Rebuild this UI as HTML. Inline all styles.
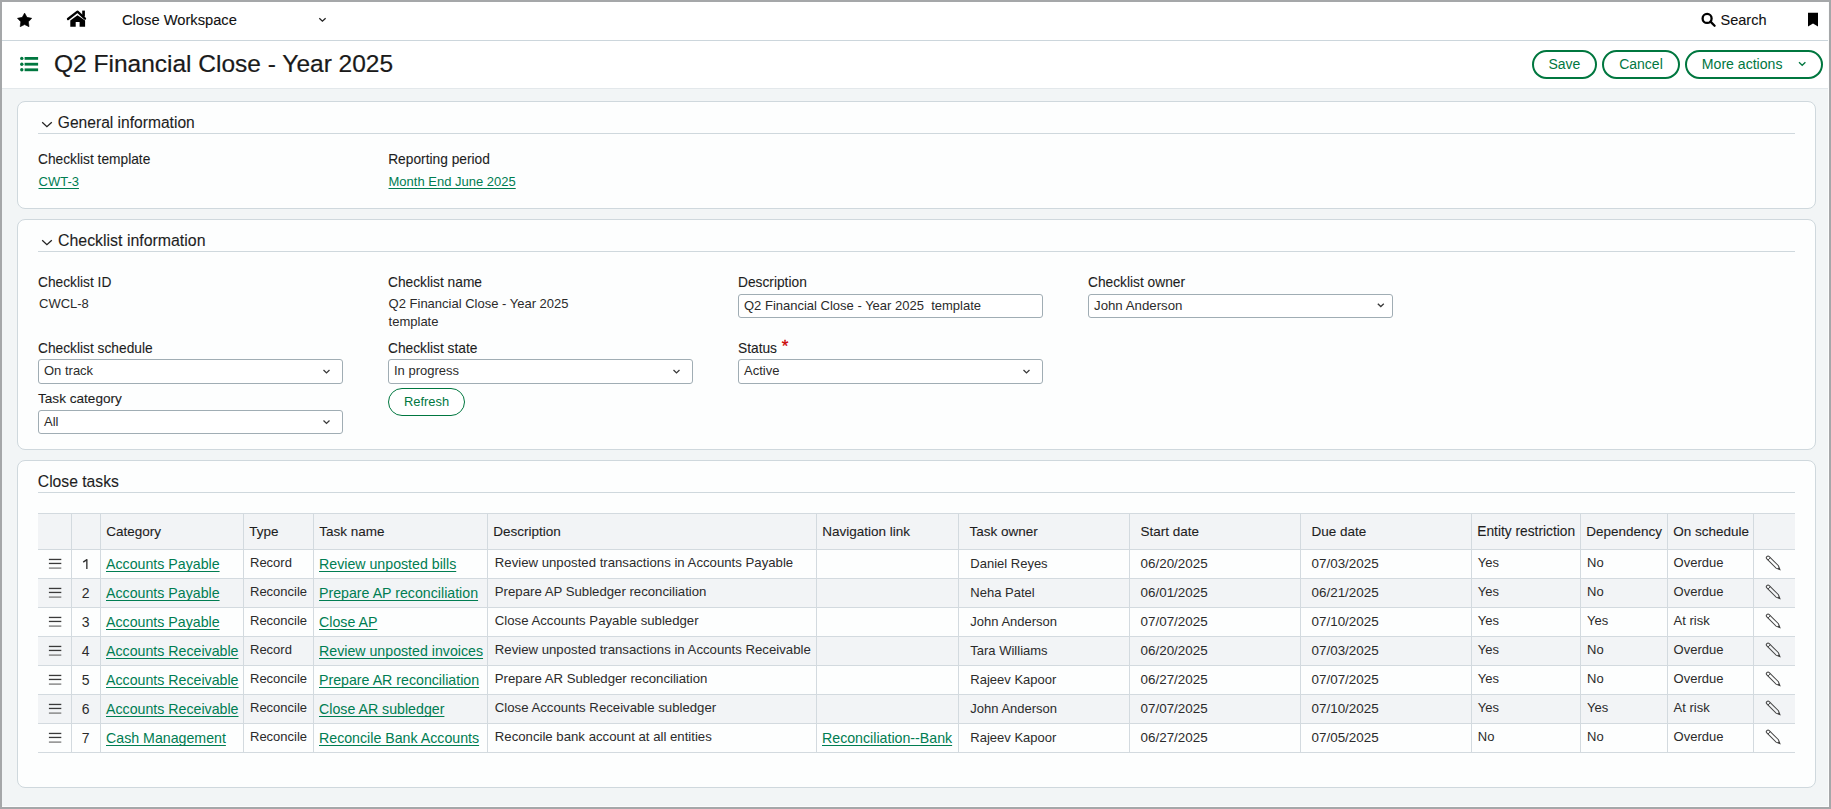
<!DOCTYPE html>
<html><head><meta charset="utf-8"><title>Q2 Financial Close - Year 2025</title>
<style>
html,body{margin:0;padding:0;width:1831px;height:809px;overflow:hidden;background:#a5a7a9}
body{position:relative;font-family:"Liberation Sans", sans-serif}
.t{position:absolute;white-space:nowrap;font-family:"Liberation Sans", sans-serif}
svg.ov{position:absolute;left:0;top:0}
</style></head><body>
<div style="position:absolute;left:0px;top:0px;width:1831px;height:809px;box-sizing:border-box;background:#a5a7a9"></div>
<div style="position:absolute;left:2px;top:2px;width:1827px;height:805px;box-sizing:border-box;background:#f2f5f6;border-right:1px solid #fbfcfc;border-bottom:1px solid #fbfcfc"></div>
<div style="position:absolute;left:2px;top:2px;width:1826px;height:38px;box-sizing:border-box;background:#fff"></div>
<div style="position:absolute;left:2px;top:40px;width:1826px;height:1px;box-sizing:border-box;background:#ccd6dc"></div>
<div style="position:absolute;left:2px;top:41px;width:1826px;height:47px;box-sizing:border-box;background:#fff"></div>
<div style="position:absolute;left:2px;top:88px;width:1826px;height:1px;box-sizing:border-box;background:#e3e8eb"></div>
<div class="t" style="left:122.00px;top:13.16px;font-size:14.7px;line-height:14.7px;color:#111;-webkit-text-stroke:0.1px #111">Close Workspace</div>
<div class="t" style="left:1720.50px;top:13.13px;font-size:14.5px;line-height:14.5px;color:#111;-webkit-text-stroke:0.1px #111">Search</div>
<div class="t" style="left:54.00px;top:51.66px;font-size:24.5px;line-height:24.5px;color:#1a1a1a;-webkit-text-stroke:0.2px #1a1a1a">Q2 Financial Close - Year 2025</div>
<div style="position:absolute;left:1532px;top:50px;width:65px;height:29px;box-sizing:border-box;border:2px solid #00773f;border-radius:20px;background:#fff"></div>
<div class="t" style="left:1548.50px;top:57.35px;font-size:14px;line-height:14px;color:#00773f;">Save</div>
<div style="position:absolute;left:1602px;top:50px;width:78px;height:29px;box-sizing:border-box;border:2px solid #00773f;border-radius:20px;background:#fff"></div>
<div class="t" style="left:1619.20px;top:57.35px;font-size:14px;line-height:14px;color:#00773f;">Cancel</div>
<div style="position:absolute;left:1685px;top:50px;width:138px;height:29px;box-sizing:border-box;border:2px solid #00773f;border-radius:20px;background:#fff"></div>
<div class="t" style="left:1701.80px;top:57.26px;font-size:14.1px;line-height:14.1px;color:#00773f;">More actions</div>
<div style="position:absolute;left:17px;top:101px;width:1799px;height:108px;box-sizing:border-box;background:#fdfefe;border:1px solid #cfd8dd;border-radius:8px"></div>
<div style="position:absolute;left:17px;top:219px;width:1799px;height:231px;box-sizing:border-box;background:#fdfefe;border:1px solid #cfd8dd;border-radius:8px"></div>
<div style="position:absolute;left:17px;top:460px;width:1799px;height:328px;box-sizing:border-box;background:#fdfefe;border:1px solid #cfd8dd;border-radius:8px"></div>
<div class="t" style="left:57.80px;top:114.99px;font-size:15.6px;line-height:15.6px;color:#1e1e1e;-webkit-text-stroke:0.1px #1e1e1e">General information</div>
<div style="position:absolute;left:38px;top:133px;width:1757px;height:1px;box-sizing:border-box;background:#cfd8dd"></div>
<div class="t" style="left:38.00px;top:153.36px;font-size:13.75px;line-height:13.75px;color:#1e1e1e;-webkit-text-stroke:0.1px #1e1e1e">Checklist template</div>
<div class="t" style="left:388.20px;top:153.36px;font-size:13.75px;line-height:13.75px;color:#1e1e1e;-webkit-text-stroke:0.1px #1e1e1e">Reporting period</div>
<div class="t" style="left:38.50px;top:175.00px;font-size:13px;line-height:13px;color:#007d52;text-decoration:underline;text-underline-offset:2px">CWT-3</div>
<div class="t" style="left:388.50px;top:175.00px;font-size:13px;line-height:13px;color:#007d52;text-decoration:underline;text-underline-offset:2px">Month End June 2025</div>
<div class="t" style="left:58.00px;top:232.74px;font-size:15.9px;line-height:15.9px;color:#1e1e1e;-webkit-text-stroke:0.1px #1e1e1e">Checklist information</div>
<div style="position:absolute;left:38px;top:251px;width:1757px;height:1px;box-sizing:border-box;background:#cfd8dd"></div>
<div class="t" style="left:38.00px;top:275.56px;font-size:13.75px;line-height:13.75px;color:#1e1e1e;-webkit-text-stroke:0.1px #1e1e1e">Checklist ID</div>
<div class="t" style="left:388.00px;top:275.56px;font-size:13.75px;line-height:13.75px;color:#1e1e1e;-webkit-text-stroke:0.1px #1e1e1e">Checklist name</div>
<div class="t" style="left:738.00px;top:275.56px;font-size:13.75px;line-height:13.75px;color:#1e1e1e;-webkit-text-stroke:0.1px #1e1e1e">Description</div>
<div class="t" style="left:1088.00px;top:275.56px;font-size:13.75px;line-height:13.75px;color:#1e1e1e;-webkit-text-stroke:0.1px #1e1e1e">Checklist owner</div>
<div class="t" style="left:39.00px;top:297.00px;font-size:13px;line-height:13px;color:#2b2b2b;">CWCL-8</div>
<div class="t" style="left:388.60px;top:297.00px;font-size:13px;line-height:13px;color:#2b2b2b;">Q2 Financial Close - Year 2025</div>
<div class="t" style="left:388.60px;top:314.60px;font-size:13px;line-height:13px;color:#2b2b2b;">template</div>
<div style="position:absolute;left:738px;top:294px;width:305px;height:24px;box-sizing:border-box;border:1px solid #a0adb4;border-radius:3px;background:#fff"></div>
<div class="t" style="left:744.00px;top:298.70px;font-size:13px;line-height:13px;color:#2b2b2b;white-space:pre">Q2 Financial Close - Year 2025  template</div>
<div style="position:absolute;left:1088px;top:294px;width:305px;height:24px;box-sizing:border-box;border:1px solid #a0adb4;border-radius:3px;background:#fff"></div>
<div class="t" style="left:1094.00px;top:299.08px;font-size:13.25px;line-height:13.25px;color:#2b2b2b;white-space:pre">John Anderson</div>
<div class="t" style="left:38.00px;top:342.36px;font-size:13.75px;line-height:13.75px;color:#1e1e1e;-webkit-text-stroke:0.1px #1e1e1e">Checklist schedule</div>
<div class="t" style="left:388.00px;top:342.36px;font-size:13.75px;line-height:13.75px;color:#1e1e1e;-webkit-text-stroke:0.1px #1e1e1e">Checklist state</div>
<div class="t" style="left:738.00px;top:342.36px;font-size:13.75px;line-height:13.75px;color:#1e1e1e;-webkit-text-stroke:0.1px #1e1e1e">Status</div>
<div class="t" style="left:781.80px;top:337.81px;font-size:17px;line-height:17px;color:#cc0000;-webkit-text-stroke:0.3px #cc0000">*</div>
<div style="position:absolute;left:38px;top:359px;width:305px;height:25px;box-sizing:border-box;border:1px solid #a0adb4;border-radius:3px;background:#fff"></div>
<div class="t" style="left:44.00px;top:364.20px;font-size:13px;line-height:13px;color:#2b2b2b;white-space:pre">On track</div>
<div style="position:absolute;left:388px;top:359px;width:305px;height:25px;box-sizing:border-box;border:1px solid #a0adb4;border-radius:3px;background:#fff"></div>
<div class="t" style="left:394.00px;top:364.20px;font-size:13px;line-height:13px;color:#2b2b2b;white-space:pre">In progress</div>
<div style="position:absolute;left:738px;top:359px;width:305px;height:25px;box-sizing:border-box;border:1px solid #a0adb4;border-radius:3px;background:#fff"></div>
<div class="t" style="left:744.00px;top:364.20px;font-size:13px;line-height:13px;color:#2b2b2b;white-space:pre">Active</div>
<div class="t" style="left:38.00px;top:392.49px;font-size:13.6px;line-height:13.6px;color:#1e1e1e;-webkit-text-stroke:0.1px #1e1e1e">Task category</div>
<div style="position:absolute;left:38px;top:410px;width:305px;height:24px;box-sizing:border-box;border:1px solid #a0adb4;border-radius:3px;background:#fff"></div>
<div class="t" style="left:44.00px;top:415.00px;font-size:13px;line-height:13px;color:#2b2b2b;white-space:pre">All</div>
<div style="position:absolute;left:388px;top:388px;width:77px;height:28px;box-sizing:border-box;border:1px solid #00773f;border-radius:20px;background:#fff"></div>
<div class="t" style="left:404.00px;top:396.08px;font-size:12.9px;line-height:12.9px;color:#00773f;">Refresh</div>
<div class="t" style="left:37.80px;top:473.71px;font-size:15.7px;line-height:15.7px;color:#1e1e1e;-webkit-text-stroke:0.1px #1e1e1e">Close tasks</div>
<div style="position:absolute;left:38px;top:492px;width:1757px;height:1px;box-sizing:border-box;background:#cfd8dd"></div>
<div style="position:absolute;left:38px;top:513px;width:1757px;height:37px;box-sizing:border-box;background:#f2f4f6"></div>
<div style="position:absolute;left:38px;top:513px;width:1757px;height:1px;box-sizing:border-box;background:#d3dadf"></div>
<div style="position:absolute;left:38px;top:579px;width:1757px;height:28px;box-sizing:border-box;background:#f2f4f6"></div>
<div style="position:absolute;left:38px;top:637px;width:1757px;height:28px;box-sizing:border-box;background:#f2f4f6"></div>
<div style="position:absolute;left:38px;top:695px;width:1757px;height:28px;box-sizing:border-box;background:#f2f4f6"></div>
<div style="position:absolute;left:38px;top:549px;width:1757px;height:1px;box-sizing:border-box;background:#d3dadf"></div>
<div style="position:absolute;left:38px;top:578px;width:1757px;height:1px;box-sizing:border-box;background:#d3dadf"></div>
<div style="position:absolute;left:38px;top:607px;width:1757px;height:1px;box-sizing:border-box;background:#d3dadf"></div>
<div style="position:absolute;left:38px;top:636px;width:1757px;height:1px;box-sizing:border-box;background:#d3dadf"></div>
<div style="position:absolute;left:38px;top:665px;width:1757px;height:1px;box-sizing:border-box;background:#d3dadf"></div>
<div style="position:absolute;left:38px;top:694px;width:1757px;height:1px;box-sizing:border-box;background:#d3dadf"></div>
<div style="position:absolute;left:38px;top:723px;width:1757px;height:1px;box-sizing:border-box;background:#d3dadf"></div>
<div style="position:absolute;left:38px;top:752px;width:1757px;height:1px;box-sizing:border-box;background:#d3dadf"></div>
<div style="position:absolute;left:71px;top:513px;width:1px;height:239px;box-sizing:border-box;background:#d3dadf"></div>
<div style="position:absolute;left:100px;top:513px;width:1px;height:239px;box-sizing:border-box;background:#d3dadf"></div>
<div style="position:absolute;left:243px;top:513px;width:1px;height:239px;box-sizing:border-box;background:#d3dadf"></div>
<div style="position:absolute;left:313px;top:513px;width:1px;height:239px;box-sizing:border-box;background:#d3dadf"></div>
<div style="position:absolute;left:487px;top:513px;width:1px;height:239px;box-sizing:border-box;background:#d3dadf"></div>
<div style="position:absolute;left:816px;top:513px;width:1px;height:239px;box-sizing:border-box;background:#d3dadf"></div>
<div style="position:absolute;left:958px;top:513px;width:1px;height:239px;box-sizing:border-box;background:#d3dadf"></div>
<div style="position:absolute;left:1129px;top:513px;width:1px;height:239px;box-sizing:border-box;background:#d3dadf"></div>
<div style="position:absolute;left:1300px;top:513px;width:1px;height:239px;box-sizing:border-box;background:#d3dadf"></div>
<div style="position:absolute;left:1471px;top:513px;width:1px;height:239px;box-sizing:border-box;background:#d3dadf"></div>
<div style="position:absolute;left:1580px;top:513px;width:1px;height:239px;box-sizing:border-box;background:#d3dadf"></div>
<div style="position:absolute;left:1667px;top:513px;width:1px;height:239px;box-sizing:border-box;background:#d3dadf"></div>
<div style="position:absolute;left:1753px;top:513px;width:1px;height:239px;box-sizing:border-box;background:#d3dadf"></div>
<div class="t" style="left:106.30px;top:524.77px;font-size:13.5px;line-height:13.5px;color:#1e1e1e;-webkit-text-stroke:0.1px #1e1e1e">Category</div>
<div class="t" style="left:249.30px;top:524.77px;font-size:13.5px;line-height:13.5px;color:#1e1e1e;-webkit-text-stroke:0.1px #1e1e1e">Type</div>
<div class="t" style="left:319.30px;top:524.77px;font-size:13.5px;line-height:13.5px;color:#1e1e1e;-webkit-text-stroke:0.1px #1e1e1e">Task name</div>
<div class="t" style="left:493.30px;top:524.77px;font-size:13.5px;line-height:13.5px;color:#1e1e1e;-webkit-text-stroke:0.1px #1e1e1e">Description</div>
<div class="t" style="left:822.30px;top:524.77px;font-size:13.5px;line-height:13.5px;color:#1e1e1e;-webkit-text-stroke:0.1px #1e1e1e">Navigation link</div>
<div class="t" style="left:969.50px;top:524.77px;font-size:13.5px;line-height:13.5px;color:#1e1e1e;-webkit-text-stroke:0.1px #1e1e1e">Task owner</div>
<div class="t" style="left:1140.50px;top:524.77px;font-size:13.5px;line-height:13.5px;color:#1e1e1e;-webkit-text-stroke:0.1px #1e1e1e">Start date</div>
<div class="t" style="left:1311.50px;top:524.77px;font-size:13.5px;line-height:13.5px;color:#1e1e1e;-webkit-text-stroke:0.1px #1e1e1e">Due date</div>
<div class="t" style="left:1477.30px;top:524.56px;font-size:13.75px;line-height:13.75px;color:#1e1e1e;-webkit-text-stroke:0.1px #1e1e1e">Entity restriction</div>
<div class="t" style="left:1586.30px;top:524.77px;font-size:13.5px;line-height:13.5px;color:#1e1e1e;-webkit-text-stroke:0.1px #1e1e1e">Dependency</div>
<div class="t" style="left:1673.30px;top:524.77px;font-size:13.5px;line-height:13.5px;color:#1e1e1e;-webkit-text-stroke:0.1px #1e1e1e">On schedule</div>
<div class="t" style="left:106.00px;top:557.48px;font-size:14.2px;line-height:14.2px;color:#007d52;text-decoration:underline;text-underline-offset:2px">Accounts Payable</div>
<div class="t" style="left:250.00px;top:556.00px;font-size:13px;line-height:13px;color:#2b2b2b;">Record</div>
<div class="t" style="left:319.00px;top:557.48px;font-size:14.2px;line-height:14.2px;color:#007d52;text-decoration:underline;text-underline-offset:2px">Review unposted bills</div>
<div class="t" style="left:494.80px;top:555.83px;font-size:13.2px;line-height:13.2px;color:#2b2b2b;">Review unposted transactions in Accounts Payable</div>
<div class="t" style="left:970.30px;top:557.00px;font-size:13px;line-height:13px;color:#2b2b2b;">Daniel Reyes</div>
<div class="t" style="left:1140.60px;top:556.66px;font-size:13.4px;line-height:13.4px;color:#2b2b2b;">06/20/2025</div>
<div class="t" style="left:1311.60px;top:556.66px;font-size:13.4px;line-height:13.4px;color:#2b2b2b;">07/03/2025</div>
<div class="t" style="left:1477.80px;top:556.00px;font-size:13px;line-height:13px;color:#2b2b2b;">Yes</div>
<div class="t" style="left:1587.00px;top:556.00px;font-size:13px;line-height:13px;color:#2b2b2b;">No</div>
<div class="t" style="left:1673.60px;top:556.00px;font-size:13px;line-height:13px;color:#2b2b2b;">Overdue</div>
<div class="t" style="left:81.80px;top:586.15px;font-size:14px;line-height:14px;color:#2b2b2b;">2</div>
<div class="t" style="left:106.00px;top:586.48px;font-size:14.2px;line-height:14.2px;color:#007d52;text-decoration:underline;text-underline-offset:2px">Accounts Payable</div>
<div class="t" style="left:250.00px;top:585.00px;font-size:13px;line-height:13px;color:#2b2b2b;">Reconcile</div>
<div class="t" style="left:319.00px;top:586.48px;font-size:14.2px;line-height:14.2px;color:#007d52;text-decoration:underline;text-underline-offset:2px">Prepare AP reconciliation</div>
<div class="t" style="left:494.80px;top:584.83px;font-size:13.2px;line-height:13.2px;color:#2b2b2b;">Prepare AP Subledger reconciliation</div>
<div class="t" style="left:970.30px;top:586.00px;font-size:13px;line-height:13px;color:#2b2b2b;">Neha Patel</div>
<div class="t" style="left:1140.60px;top:585.66px;font-size:13.4px;line-height:13.4px;color:#2b2b2b;">06/01/2025</div>
<div class="t" style="left:1311.60px;top:585.66px;font-size:13.4px;line-height:13.4px;color:#2b2b2b;">06/21/2025</div>
<div class="t" style="left:1477.80px;top:585.00px;font-size:13px;line-height:13px;color:#2b2b2b;">Yes</div>
<div class="t" style="left:1587.00px;top:585.00px;font-size:13px;line-height:13px;color:#2b2b2b;">No</div>
<div class="t" style="left:1673.60px;top:585.00px;font-size:13px;line-height:13px;color:#2b2b2b;">Overdue</div>
<div class="t" style="left:81.80px;top:615.15px;font-size:14px;line-height:14px;color:#2b2b2b;">3</div>
<div class="t" style="left:106.00px;top:615.48px;font-size:14.2px;line-height:14.2px;color:#007d52;text-decoration:underline;text-underline-offset:2px">Accounts Payable</div>
<div class="t" style="left:250.00px;top:614.00px;font-size:13px;line-height:13px;color:#2b2b2b;">Reconcile</div>
<div class="t" style="left:319.00px;top:615.48px;font-size:14.2px;line-height:14.2px;color:#007d52;text-decoration:underline;text-underline-offset:2px">Close AP</div>
<div class="t" style="left:494.80px;top:613.83px;font-size:13.2px;line-height:13.2px;color:#2b2b2b;">Close Accounts Payable subledger</div>
<div class="t" style="left:970.30px;top:615.00px;font-size:13px;line-height:13px;color:#2b2b2b;">John Anderson</div>
<div class="t" style="left:1140.60px;top:614.66px;font-size:13.4px;line-height:13.4px;color:#2b2b2b;">07/07/2025</div>
<div class="t" style="left:1311.60px;top:614.66px;font-size:13.4px;line-height:13.4px;color:#2b2b2b;">07/10/2025</div>
<div class="t" style="left:1477.80px;top:614.00px;font-size:13px;line-height:13px;color:#2b2b2b;">Yes</div>
<div class="t" style="left:1587.00px;top:614.00px;font-size:13px;line-height:13px;color:#2b2b2b;">Yes</div>
<div class="t" style="left:1673.60px;top:614.00px;font-size:13px;line-height:13px;color:#2b2b2b;">At risk</div>
<div class="t" style="left:81.80px;top:644.15px;font-size:14px;line-height:14px;color:#2b2b2b;">4</div>
<div class="t" style="left:106.00px;top:644.48px;font-size:14.2px;line-height:14.2px;color:#007d52;text-decoration:underline;text-underline-offset:2px">Accounts Receivable</div>
<div class="t" style="left:250.00px;top:643.00px;font-size:13px;line-height:13px;color:#2b2b2b;">Record</div>
<div class="t" style="left:319.00px;top:644.48px;font-size:14.2px;line-height:14.2px;color:#007d52;text-decoration:underline;text-underline-offset:2px">Review unposted invoices</div>
<div class="t" style="left:494.80px;top:642.83px;font-size:13.2px;line-height:13.2px;color:#2b2b2b;">Review unposted transactions in Accounts Receivable</div>
<div class="t" style="left:970.30px;top:644.00px;font-size:13px;line-height:13px;color:#2b2b2b;">Tara Williams</div>
<div class="t" style="left:1140.60px;top:643.66px;font-size:13.4px;line-height:13.4px;color:#2b2b2b;">06/20/2025</div>
<div class="t" style="left:1311.60px;top:643.66px;font-size:13.4px;line-height:13.4px;color:#2b2b2b;">07/03/2025</div>
<div class="t" style="left:1477.80px;top:643.00px;font-size:13px;line-height:13px;color:#2b2b2b;">Yes</div>
<div class="t" style="left:1587.00px;top:643.00px;font-size:13px;line-height:13px;color:#2b2b2b;">No</div>
<div class="t" style="left:1673.60px;top:643.00px;font-size:13px;line-height:13px;color:#2b2b2b;">Overdue</div>
<div class="t" style="left:81.80px;top:673.15px;font-size:14px;line-height:14px;color:#2b2b2b;">5</div>
<div class="t" style="left:106.00px;top:673.48px;font-size:14.2px;line-height:14.2px;color:#007d52;text-decoration:underline;text-underline-offset:2px">Accounts Receivable</div>
<div class="t" style="left:250.00px;top:672.00px;font-size:13px;line-height:13px;color:#2b2b2b;">Reconcile</div>
<div class="t" style="left:319.00px;top:673.48px;font-size:14.2px;line-height:14.2px;color:#007d52;text-decoration:underline;text-underline-offset:2px">Prepare AR reconciliation</div>
<div class="t" style="left:494.80px;top:671.83px;font-size:13.2px;line-height:13.2px;color:#2b2b2b;">Prepare AR Subledger reconciliation</div>
<div class="t" style="left:970.30px;top:673.00px;font-size:13px;line-height:13px;color:#2b2b2b;">Rajeev Kapoor</div>
<div class="t" style="left:1140.60px;top:672.66px;font-size:13.4px;line-height:13.4px;color:#2b2b2b;">06/27/2025</div>
<div class="t" style="left:1311.60px;top:672.66px;font-size:13.4px;line-height:13.4px;color:#2b2b2b;">07/07/2025</div>
<div class="t" style="left:1477.80px;top:672.00px;font-size:13px;line-height:13px;color:#2b2b2b;">Yes</div>
<div class="t" style="left:1587.00px;top:672.00px;font-size:13px;line-height:13px;color:#2b2b2b;">No</div>
<div class="t" style="left:1673.60px;top:672.00px;font-size:13px;line-height:13px;color:#2b2b2b;">Overdue</div>
<div class="t" style="left:81.80px;top:702.15px;font-size:14px;line-height:14px;color:#2b2b2b;">6</div>
<div class="t" style="left:106.00px;top:702.48px;font-size:14.2px;line-height:14.2px;color:#007d52;text-decoration:underline;text-underline-offset:2px">Accounts Receivable</div>
<div class="t" style="left:250.00px;top:701.00px;font-size:13px;line-height:13px;color:#2b2b2b;">Reconcile</div>
<div class="t" style="left:319.00px;top:702.48px;font-size:14.2px;line-height:14.2px;color:#007d52;text-decoration:underline;text-underline-offset:2px">Close AR subledger</div>
<div class="t" style="left:494.80px;top:700.83px;font-size:13.2px;line-height:13.2px;color:#2b2b2b;">Close Accounts Receivable subledger</div>
<div class="t" style="left:970.30px;top:702.00px;font-size:13px;line-height:13px;color:#2b2b2b;">John Anderson</div>
<div class="t" style="left:1140.60px;top:701.66px;font-size:13.4px;line-height:13.4px;color:#2b2b2b;">07/07/2025</div>
<div class="t" style="left:1311.60px;top:701.66px;font-size:13.4px;line-height:13.4px;color:#2b2b2b;">07/10/2025</div>
<div class="t" style="left:1477.80px;top:701.00px;font-size:13px;line-height:13px;color:#2b2b2b;">Yes</div>
<div class="t" style="left:1587.00px;top:701.00px;font-size:13px;line-height:13px;color:#2b2b2b;">Yes</div>
<div class="t" style="left:1673.60px;top:701.00px;font-size:13px;line-height:13px;color:#2b2b2b;">At risk</div>
<div class="t" style="left:81.80px;top:731.15px;font-size:14px;line-height:14px;color:#2b2b2b;">7</div>
<div class="t" style="left:106.00px;top:731.48px;font-size:14.2px;line-height:14.2px;color:#007d52;text-decoration:underline;text-underline-offset:2px">Cash Management</div>
<div class="t" style="left:250.00px;top:730.00px;font-size:13px;line-height:13px;color:#2b2b2b;">Reconcile</div>
<div class="t" style="left:319.00px;top:731.48px;font-size:14.2px;line-height:14.2px;color:#007d52;text-decoration:underline;text-underline-offset:2px">Reconcile Bank Accounts</div>
<div class="t" style="left:494.80px;top:729.83px;font-size:13.2px;line-height:13.2px;color:#2b2b2b;">Reconcile bank account at all entities</div>
<div class="t" style="left:822.00px;top:731.48px;font-size:14.2px;line-height:14.2px;color:#007d52;text-decoration:underline;text-underline-offset:2px">Reconciliation--Bank</div>
<div class="t" style="left:970.30px;top:731.00px;font-size:13px;line-height:13px;color:#2b2b2b;">Rajeev Kapoor</div>
<div class="t" style="left:1140.60px;top:730.66px;font-size:13.4px;line-height:13.4px;color:#2b2b2b;">06/27/2025</div>
<div class="t" style="left:1311.60px;top:730.66px;font-size:13.4px;line-height:13.4px;color:#2b2b2b;">07/05/2025</div>
<div class="t" style="left:1477.80px;top:730.00px;font-size:13px;line-height:13px;color:#2b2b2b;">No</div>
<div class="t" style="left:1587.00px;top:730.00px;font-size:13px;line-height:13px;color:#2b2b2b;">No</div>
<div class="t" style="left:1673.60px;top:730.00px;font-size:13px;line-height:13px;color:#2b2b2b;">Overdue</div>
<svg class="ov" width="1831" height="809" viewBox="0 0 1831 809">
<path d="M1377.8 303.8 L1380.8 306.59999999999997 L1383.8 303.8" fill="none" stroke="#3a3a3a" stroke-width="1.3"/>
<path d="M323.5 370.1 L326.5 372.9 L329.5 370.1" fill="none" stroke="#3a3a3a" stroke-width="1.3"/>
<path d="M673.5 370.1 L676.5 372.9 L679.5 370.1" fill="none" stroke="#3a3a3a" stroke-width="1.3"/>
<path d="M1023.5 370.1 L1026.5 372.9 L1029.5 370.1" fill="none" stroke="#3a3a3a" stroke-width="1.3"/>
<path d="M323.5 420.6 L326.5 423.4 L329.5 420.6" fill="none" stroke="#3a3a3a" stroke-width="1.3"/>
<rect x="48.9" y="558.8000000000001" width="12.4" height="1.3" fill="#3a3a3a"/>
<rect x="48.9" y="562.8000000000001" width="12.4" height="1.3" fill="#3a3a3a"/>
<rect x="48.9" y="567.45" width="12.4" height="1.3" fill="#7a7a7a"/>
<rect x="86.2" y="559.2" width="1.3" height="9.8" fill="#2b2b2b"/>
<path d="M86.9 559.6 L83.2 562.1" stroke="#2b2b2b" stroke-width="1.3"/>
<g transform="translate(1767.2 556.9) rotate(45)"><path d="M1.2 -1.7 L14.2 -1.7 L18 0 L14.2 1.7 L1.2 1.7 A1.7 1.7 0 0 1 1.2 -1.7 Z" fill="none" stroke="#444" stroke-width="1"/><line x1="2.8" y1="-1.7" x2="2.8" y2="1.7" stroke="#444" stroke-width="0.9"/><path d="M15.6 -1 L18 0 L15.6 1Z" fill="#444"/></g>
<rect x="48.9" y="587.8000000000001" width="12.4" height="1.3" fill="#3a3a3a"/>
<rect x="48.9" y="591.8000000000001" width="12.4" height="1.3" fill="#3a3a3a"/>
<rect x="48.9" y="596.45" width="12.4" height="1.3" fill="#7a7a7a"/>
<g transform="translate(1767.2 585.9) rotate(45)"><path d="M1.2 -1.7 L14.2 -1.7 L18 0 L14.2 1.7 L1.2 1.7 A1.7 1.7 0 0 1 1.2 -1.7 Z" fill="none" stroke="#444" stroke-width="1"/><line x1="2.8" y1="-1.7" x2="2.8" y2="1.7" stroke="#444" stroke-width="0.9"/><path d="M15.6 -1 L18 0 L15.6 1Z" fill="#444"/></g>
<rect x="48.9" y="616.8000000000001" width="12.4" height="1.3" fill="#3a3a3a"/>
<rect x="48.9" y="620.8000000000001" width="12.4" height="1.3" fill="#3a3a3a"/>
<rect x="48.9" y="625.45" width="12.4" height="1.3" fill="#7a7a7a"/>
<g transform="translate(1767.2 614.9) rotate(45)"><path d="M1.2 -1.7 L14.2 -1.7 L18 0 L14.2 1.7 L1.2 1.7 A1.7 1.7 0 0 1 1.2 -1.7 Z" fill="none" stroke="#444" stroke-width="1"/><line x1="2.8" y1="-1.7" x2="2.8" y2="1.7" stroke="#444" stroke-width="0.9"/><path d="M15.6 -1 L18 0 L15.6 1Z" fill="#444"/></g>
<rect x="48.9" y="645.8000000000001" width="12.4" height="1.3" fill="#3a3a3a"/>
<rect x="48.9" y="649.8000000000001" width="12.4" height="1.3" fill="#3a3a3a"/>
<rect x="48.9" y="654.45" width="12.4" height="1.3" fill="#7a7a7a"/>
<g transform="translate(1767.2 643.9) rotate(45)"><path d="M1.2 -1.7 L14.2 -1.7 L18 0 L14.2 1.7 L1.2 1.7 A1.7 1.7 0 0 1 1.2 -1.7 Z" fill="none" stroke="#444" stroke-width="1"/><line x1="2.8" y1="-1.7" x2="2.8" y2="1.7" stroke="#444" stroke-width="0.9"/><path d="M15.6 -1 L18 0 L15.6 1Z" fill="#444"/></g>
<rect x="48.9" y="674.8000000000001" width="12.4" height="1.3" fill="#3a3a3a"/>
<rect x="48.9" y="678.8000000000001" width="12.4" height="1.3" fill="#3a3a3a"/>
<rect x="48.9" y="683.45" width="12.4" height="1.3" fill="#7a7a7a"/>
<g transform="translate(1767.2 672.9) rotate(45)"><path d="M1.2 -1.7 L14.2 -1.7 L18 0 L14.2 1.7 L1.2 1.7 A1.7 1.7 0 0 1 1.2 -1.7 Z" fill="none" stroke="#444" stroke-width="1"/><line x1="2.8" y1="-1.7" x2="2.8" y2="1.7" stroke="#444" stroke-width="0.9"/><path d="M15.6 -1 L18 0 L15.6 1Z" fill="#444"/></g>
<rect x="48.9" y="703.8000000000001" width="12.4" height="1.3" fill="#3a3a3a"/>
<rect x="48.9" y="707.8000000000001" width="12.4" height="1.3" fill="#3a3a3a"/>
<rect x="48.9" y="712.45" width="12.4" height="1.3" fill="#7a7a7a"/>
<g transform="translate(1767.2 701.9) rotate(45)"><path d="M1.2 -1.7 L14.2 -1.7 L18 0 L14.2 1.7 L1.2 1.7 A1.7 1.7 0 0 1 1.2 -1.7 Z" fill="none" stroke="#444" stroke-width="1"/><line x1="2.8" y1="-1.7" x2="2.8" y2="1.7" stroke="#444" stroke-width="0.9"/><path d="M15.6 -1 L18 0 L15.6 1Z" fill="#444"/></g>
<rect x="48.9" y="732.8000000000001" width="12.4" height="1.3" fill="#3a3a3a"/>
<rect x="48.9" y="736.8000000000001" width="12.4" height="1.3" fill="#3a3a3a"/>
<rect x="48.9" y="741.45" width="12.4" height="1.3" fill="#7a7a7a"/>
<g transform="translate(1767.2 730.9) rotate(45)"><path d="M1.2 -1.7 L14.2 -1.7 L18 0 L14.2 1.7 L1.2 1.7 A1.7 1.7 0 0 1 1.2 -1.7 Z" fill="none" stroke="#444" stroke-width="1"/><line x1="2.8" y1="-1.7" x2="2.8" y2="1.7" stroke="#444" stroke-width="0.9"/><path d="M15.6 -1 L18 0 L15.6 1Z" fill="#444"/></g>
<polygon points="24.60,13.10 26.95,17.36 31.73,18.28 28.40,21.84 29.01,26.67 24.60,24.60 20.19,26.67 20.80,21.84 17.47,18.28 22.25,17.36" fill="#000" stroke="#000" stroke-width="0.6" stroke-linejoin="round"/>
<path d="M68 19 L77.5 11.6 L85 18.6" fill="none" stroke="#000" stroke-width="2.3" stroke-linecap="round" stroke-linejoin="round"/>
<rect x="82.2" y="10.6" width="2.7" height="6" fill="#000"/>
<path d="M70.3 20.6 L77.5 15.2 L85.1 20.6 L85.1 26.7 L79.6 26.7 L79.6 21.9 L75.7 21.9 L75.7 26.7 L70.3 26.7 Z" fill="#000"/>
<path d="M319.3 18.3 L322.4 21.2 L325.6 18.3" fill="none" stroke="#222" stroke-width="1.3"/>
<circle cx="1707.1" cy="18.4" r="4.5" fill="none" stroke="#000" stroke-width="2.3"/>
<line x1="1710.5" y1="21.6" x2="1714.6" y2="25.7" stroke="#000" stroke-width="2.3" stroke-linecap="round"/>
<polygon points="1808,12.8 1818,12.8 1818,26.4 1813,23.6 1808,26.4" fill="#000"/>
<circle cx="21.8" cy="58.4" r="1.7" fill="#00773f"/>
<rect x="24.6" y="57.0" width="13.5" height="2.8" fill="#00773f"/>
<circle cx="21.8" cy="64.2" r="1.7" fill="#00773f"/>
<rect x="24.6" y="62.800000000000004" width="13.5" height="2.8" fill="#00773f"/>
<circle cx="21.8" cy="69.8" r="1.7" fill="#00773f"/>
<rect x="24.6" y="68.39999999999999" width="13.5" height="2.8" fill="#00773f"/>
<path d="M42.2 122.2 L46.9 126.7 L51.8 122.2" fill="none" stroke="#222" stroke-width="1.3"/>
<path d="M42.2 240.2 L46.9 244.7 L51.8 240.2" fill="none" stroke="#222" stroke-width="1.3"/>
<path d="M1799 62.3 L1802.2 65.3 L1805.4 62.3" fill="none" stroke="#00773f" stroke-width="1.3"/>
</svg>
</body></html>
